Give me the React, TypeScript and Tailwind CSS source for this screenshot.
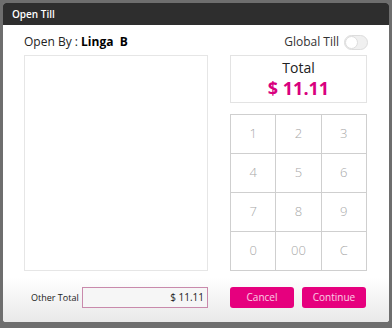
import { useState } from 'react';

const KEYS = ['1', '2', '3', '4', '5', '6', '7', '8', '9', '0', '00', 'C'];

export default function App() {
  const [globalTill, setGlobalTill] = useState(false);

  return (
    <div className="h-[328px] w-[392px] bg-[#6e6e6e] p-[3px] pb-[6px] font-['Open_Sans','Noto_Sans',sans-serif]">
      <div className="flex h-full flex-col overflow-hidden rounded-[3px] bg-white">
        <div className="flex h-[22px] items-center bg-[#2e2e2e] px-[9px] text-[10px] font-semibold text-white">
          Open Till
        </div>
        <div className="flex flex-1 flex-col bg-gradient-to-b from-white from-[85%] to-[#e9e9e9] px-[21px] pt-[7px]">
          <div className="flex h-[20px] items-center justify-between">
            <div className="text-[12px] text-[#222]">
              Open By : <span className="font-bold text-black">Linga&nbsp; B</span>
            </div>
            <div className="flex items-center gap-[5px] text-[12px] text-[#333]">
              Global Till
              <button
                onClick={() => setGlobalTill(!globalTill)}
                className={`relative h-[15px] w-[24px] rounded-full border border-[#ddd] ${globalTill ? 'bg-[#e5007d]' : 'bg-[#f0f0f0]'}`}
              >
                <span
                  className={`absolute top-[0px] h-[13px] w-[13px] rounded-full border border-[#ddd] bg-white ${globalTill ? 'right-0' : 'left-0'}`}
                />
              </button>
            </div>
          </div>
          <div className="mt-[3px] flex gap-[22px]">
            <div className="h-[216px] w-[184px] border border-[#e6e6e6]" />
            <div className="flex w-[137px] flex-col">
              <div className="flex h-[48px] flex-col items-center justify-center border border-[#e3e3e3]">
                <div className="text-[14px] leading-[18px] text-[#222]">Total</div>
                <div className="text-[18px] font-bold leading-[22px] text-[#d9007e]">$ 11.11</div>
              </div>
              <div className="mt-[11px] grid grid-cols-3 grid-rows-4 border-l border-t border-[#cfcfcf]">
                {KEYS.map((k) => (
                  <button
                    key={k}
                    className="flex h-[39px] items-center justify-center border-b border-r border-[#cfcfcf] bg-white text-[13px] font-light text-[#a8a8a8]"
                  >
                    {k}
                  </button>
                ))}
              </div>
            </div>
          </div>
          <div className="mt-[16px] flex items-center">
            <div className="w-[58px] whitespace-nowrap pl-[7px] text-[9px] text-[#222]">Other Total</div>
            <div className="flex h-[21px] w-[126px] items-center justify-end border border-[#c98aac] bg-[#f6f6f6] pr-[3px] text-[10px] text-[#222]">
              $ 11.11
            </div>
            <div className="ml-[22px] flex gap-[8px]">
              <button className="h-[21px] w-[64px] rounded-[3px] bg-[#e6007e] text-[10px] text-white/80">Cancel</button>
              <button className="h-[21px] w-[64px] rounded-[3px] bg-[#e6007e] text-[10px] text-white/80">Continue</button>
            </div>
          </div>
        </div>
      </div>
    </div>
  );
}
